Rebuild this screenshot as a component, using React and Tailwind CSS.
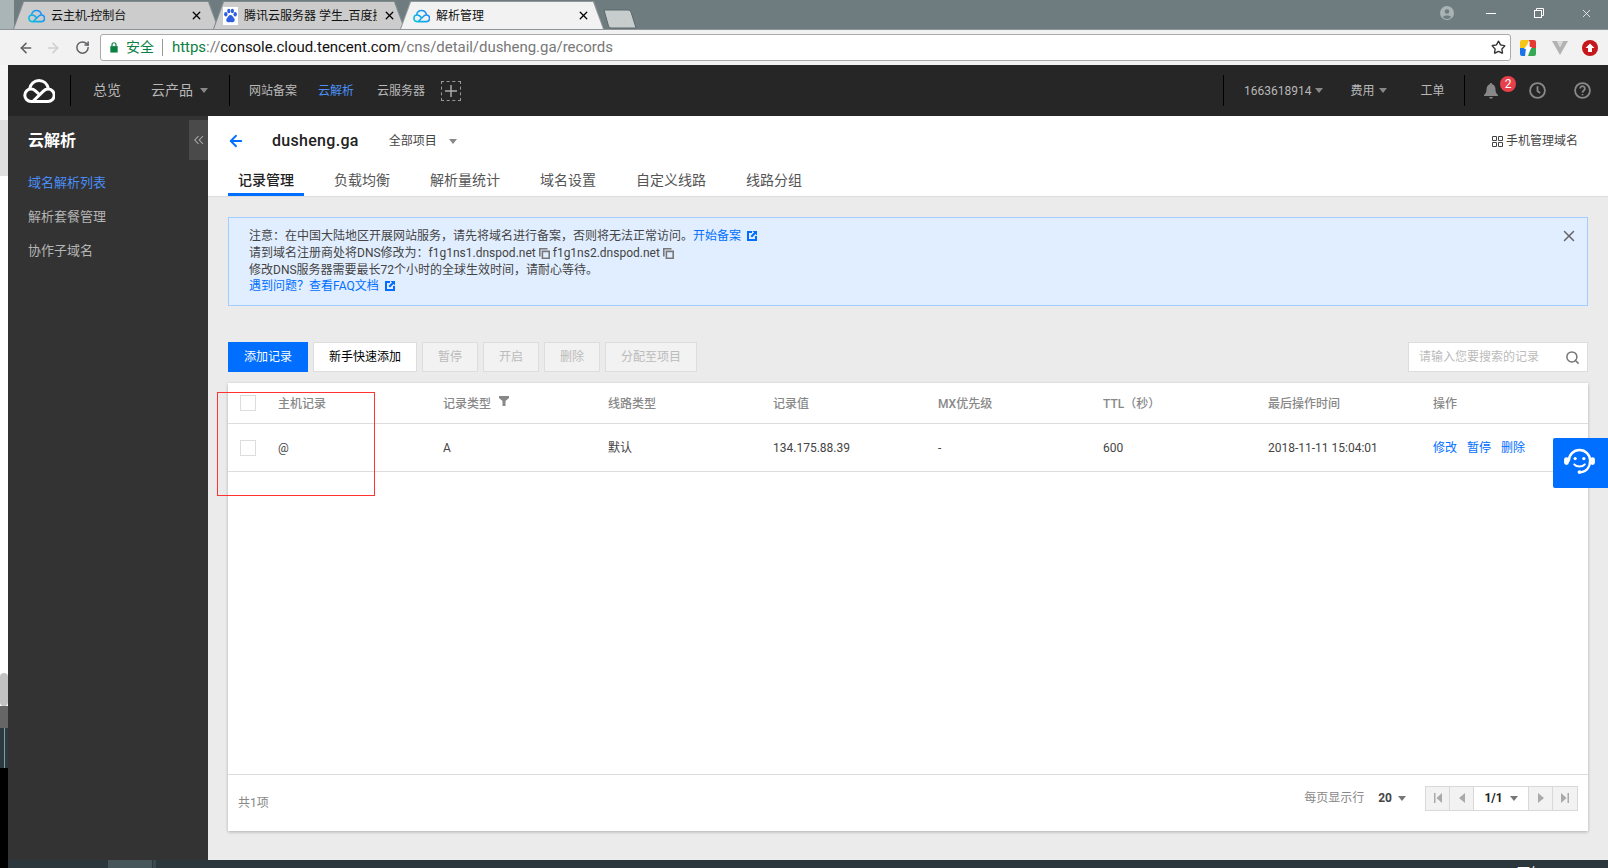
import React from "react";
import { ArrowLeft, ArrowRight, RotateCw, Star, X, Search } from "lucide-react";

const cloudPath = "M8 22.5H25a6.2 6.2 0 0 0 0-12.400c-1.800 0-3.400.8-4.600 2L10.800 21.500M8 22.500a6.200 6.200 0 1 1 0-12.400c1.800 0 3.200.7 4.400 1.800l2.500 2.200M6.500 10.300C7.500 5 11.200 1.500 16 1.500s8.500 3.500 9.500 8.600";

const Cloud = ({ className }) => (
  <svg viewBox="0 0 32 24" className={className} fill="none" stroke="currentColor" strokeWidth="3" strokeLinecap="round" strokeLinejoin="round">
    <path d={cloudPath} />
  </svg>
);

const FavCloud = ({ id }) => (
  <svg viewBox="0 0 32 24" className="w-[17px] h-[14px] shrink-0" fill="none" strokeWidth="3" strokeLinecap="round" strokeLinejoin="round">
    <defs>
      <linearGradient id={id} gradientUnits="userSpaceOnUse" x1="0" y1="24" x2="32" y2="0">
        <stop offset="0" stopColor="#00c8dc" />
        <stop offset="1" stopColor="#2a7fff" />
      </linearGradient>
    </defs>
    <path stroke={`url(#${id})`} d={cloudPath} />
  </svg>
);

const Paw = () => (
  <svg viewBox="0 0 16 18" className="w-[15px] h-[18px] shrink-0 bg-white">
    <g fill="#2f5fe0">
      <ellipse cx="3" cy="7" rx="1.800" ry="2.400" />
      <ellipse cx="6.200" cy="3.600" rx="1.700" ry="2.400" />
      <ellipse cx="10" cy="3.600" rx="1.700" ry="2.400" />
      <ellipse cx="13" cy="7" rx="1.800" ry="2.400" />
      <path d="M8 8c-2 0-2.400 2-3.600 3-1.400 1.200-1.200 4.400 1.200 4.600 1 .1 1.600-.3 2.400-.3s1.400.4 2.400.3c2.400-.2 2.600-3.400 1.200-4.600C10.400 10 10 8 8 8z" />
    </g>
  </svg>
);

const Caret = ({ className = "" }) => (
  <span className={`inline-block w-0 h-0 border-x-[4px] border-x-transparent border-t-[5px] ${className}`} />
);

const ExtLink = () => (
  <svg viewBox="0 0 10 10" className="inline-block w-[10px] h-[10px] ml-[6px] align-[-1px]">
    <path d="M0 0H5V2H2V8H8V5H10V10H0Z" fill="#006eff" />
    <path d="M5.500 0H10V4.500L8.500 3 5 6.500 3.500 5 7 1.500Z" fill="#006eff" />
  </svg>
);

const CopyIcon = () => (
  <svg viewBox="0 0 11 11" className="inline-block w-[11px] h-[11px] mx-[3px] align-[-2px]" fill="none" stroke="#777" strokeWidth="1.600">
    <path d="M0.800 8.500V0.800H8.500" />
    <path d="M3.400 3.400H10.200V10.200H3.400Z" />
  </svg>
);

const Check = () => <span className="block w-4 h-4 shrink-0 border border-[#ddd] bg-white" />;

const tabClip = "[clip-path:polygon(10px_0,calc(100%-10px)_0,100%_100%,0_100%)]";

function BrowserTab({ width, ml, active, icon, title, titleW, z, pl, mr }) {
  return (
    <div className={`relative h-[28px] mt-[1px] ${ml} ${width} ${z} ${tabClip} ${active ? "bg-[#8e9699]" : "bg-[#7f8a8d]"}`}>
      <div className={`absolute inset-x-0 top-[1px] bottom-0 mx-[1px] ${tabClip} flex items-center ${pl} ${active ? "bg-[#f2f2f2]" : "bg-[#cccccc]"}`}>
        {icon}
        <span className={`ml-[6px] overflow-hidden whitespace-nowrap text-[12px] text-[#111] ${titleW}`}>{title}</span>
        <X className={`w-[13px] h-[13px] ml-auto ${mr} text-black`} strokeWidth={2.4} />
      </div>
    </div>
  );
}

function Th({ children }) {
  return <div className="text-[12px] font-medium text-[#888] mt-[1px]">{children}</div>;
}

function DisBtn({ children }) {
  return <span className="h-[30px] px-[15px] flex items-center border border-[#ddd] bg-[#f2f2f2] text-[#bbb] text-[12px]">{children}</span>;
}

function PageCell({ children, last }) {
  return <span className={`w-[24px] h-full flex items-center justify-center bg-[#f2f2f2] ${last ? "" : "border-r border-[#d9d9d9]"}`}>{children}</span>;
}

export default function App() {
  return (
    <div className="relative w-[1608px] h-[868px] overflow-hidden flex flex-col bg-white [font-family:Roboto,'Noto_Sans_CJK_SC',sans-serif]">
      {/* browser tab strip */}
      <div className="h-[29px] shrink-0 flex pl-[13px] bg-[linear-gradient(to_right,#aab5b8_0,#aab5b8_14px,#6e7b7f_14px)]">
        <BrowserTab width="w-[206px]" ml="" z="z-0" pl="pl-[14px]" mr="mr-[15px]" icon={<FavCloud id="f1" />} title="云主机-控制台" titleW="w-[120px]" />
        <BrowserTab width="w-[192px]" ml="-ml-[6px]" z="z-0" pl="pl-[9px]" mr="mr-[8px]" icon={<Paw />} title="腾讯云服务器 学生_百度搜索" titleW="w-[133px]" />
        <BrowserTab width="w-[204px]" ml="-ml-[5px]" z="z-10" pl="pl-[12px]" mr="mr-[13px]" active icon={<FavCloud id="f2" />} title="解析管理" titleW="w-[60px]" />
        <svg viewBox="0 0 34 20" className="w-[34px] h-[20px] mt-[9px] -ml-[1px]">
          <path d="M1 1H25Q27 1 28 3L33 19H8Q6 19 5.500 17Z" fill="#c7cccd" stroke="#5d686b" />
        </svg>
        <div className="ml-auto flex items-center h-[26px] text-[#e8ecec]">
          <svg viewBox="0 0 16 16" className="w-[14px] h-[14px] mr-[32px] text-[#a9b3b5]">
            <circle cx="8" cy="8" r="8" fill="currentColor" />
            <circle cx="8" cy="6.200" r="2.600" fill="#6e7b7f" />
            <path d="M3.200 12.600c1-2.400 8.600-2.400 9.600 0a6.500 6.500 0 0 1-9.600 0z" fill="#6e7b7f" />
          </svg>
          <span className="w-[10px] h-[1px] bg-white mr-[38px]" />
          <svg viewBox="0 0 10 10" className="w-[10px] h-[10px] mr-[36px]" fill="none" stroke="#fff">
            <rect x="0.500" y="2.500" width="7" height="7" />
            <path d="M2.500 2.500V.5H9.500V7.500H7.500" />
          </svg>
          <X className="w-[13px] h-[13px] mr-[15px] text-white" strokeWidth={1.4} />
        </div>
      </div>

      {/* address bar */}
      <div className="h-[36px] shrink-0 bg-[#f2f2f2] border-t border-[#8b9597] flex items-center pl-[18px]">
        <ArrowLeft className="w-[16px] h-[16px] text-[#606266]" strokeWidth={2.4} />
        <ArrowRight className="w-[16px] h-[16px] ml-[11px] text-[#d0d0d0]" strokeWidth={2.4} />
        <RotateCw className="w-[15px] h-[15px] ml-[14px] text-[#606266]" strokeWidth={2.4} />
        <div className="ml-[10px] w-[1411px] h-[27px] bg-white border border-[#aaa] rounded-[3px] flex items-center pl-[9px] pr-[4px]">
          <svg viewBox="0 0 8 12" className="w-[8px] h-[11px]">
            <rect y="4.500" width="8" height="7" fill="#0b8043" />
            <path d="M1.800 5V3a2.200 2.200 0 0 1 4.400 0v2" fill="none" stroke="#0b8043" strokeWidth="1.300" />
          </svg>
          <span className="ml-[8px] text-[14px] text-[#0b8043]">安全</span>
          <span className="ml-[8px] w-[1px] h-[17px] bg-[#999]" />
          <span className="ml-[9px] text-[15px] tracking-[-0.04px] whitespace-nowrap">
            <span className="text-[#0b8043]">https</span>
            <span className="text-[#777]">://</span>
            <span className="text-[#111]">console.cloud.tencent.com</span>
            <span className="text-[#777]">/cns/detail/dusheng.ga/records</span>
          </span>
          <Star className="ml-auto w-[15px] h-[15px] text-[#333]" strokeWidth={2.2} />
        </div>
        <svg viewBox="0 0 16 16" className="w-[16px] h-[16px] ml-[9px]">
          <path d="M2 0H9L6 8H0V2Q0 0 2 0Z" fill="#f5c518" />
          <path d="M9 0H14Q16 0 16 2V8H10Z" fill="#e53935" />
          <path d="M0 8H6L5 16H2Q0 16 0 14Z" fill="#1a73e8" />
          <path d="M8 16L11 8H16V14Q16 16 14 16Z" fill="#34a853" />
          <path d="M10 1L4 9H7.500L6 15L12 7H8.500Z" fill="#fff" />
        </svg>
        <svg viewBox="0 0 16 14" className="w-[16px] h-[14px] ml-[16px]">
          <path d="M0 0H5L8 6 11 0H16L8 14Z" fill="#b3b3b3" />
          <path d="M5 0H11L8 6Z" fill="#d9d9d9" />
        </svg>
        <svg viewBox="0 0 16 16" className="w-[16px] h-[16px] ml-[14px]">
          <circle cx="8" cy="8" r="8" fill="#c5171c" />
          <path d="M8 3.500L12.500 8H10V12H6V8H3.500Z" fill="#fff" />
        </svg>
      </div>

      <div className="flex-1 flex min-h-0">
        {/* left strip of the window behind */}
        <div className="w-[8px] shrink-0 flex flex-col">
          <div className="h-[55px] bg-[#f5f5f5]" />
          <div className="h-[56px] bg-[#e0e0e0]" />
          <div className="h-[497px] bg-white" />
          <div className="h-[33px] bg-[#c2c2c2] rounded-[4px]" />
          <div className="h-[22px] bg-[#666]" />
          <div className="h-[40px] bg-[#2b3a40] flex justify-center"><span className="w-[1px] bg-[#8a9a9a]" /></div>
          <div className="flex-1 bg-black" />
        </div>

        <div className="flex-1 flex flex-col min-w-0">
          {/* console nav */}
          <div className="h-[51px] shrink-0 bg-[#262626] flex items-center text-[#b8b8b8] relative">
            <Cloud className="w-[32px] h-[24px] ml-[15px] text-white" />
            <span className="w-[1px] h-[31px] bg-black ml-[15px]" />
            <span className="ml-[22px] text-[14px]">总览</span>
            <span className="ml-[30px] text-[14px]">云产品</span>
            <Caret className="ml-[7px] border-t-[#888]" />
            <span className="w-[1px] h-[31px] bg-black ml-[21px]" />
            <span className="ml-[19px] text-[12px]">网站备案</span>
            <span className="ml-[21px] text-[12px] text-[#4a90f5]">云解析</span>
            <span className="ml-[23px] text-[12px]">云服务器</span>
            <span className="ml-[16px] w-[20px] h-[20px] border border-dashed border-[#999] flex items-center justify-center text-[#aaa]">
              <svg viewBox="0 0 12 12" className="w-[12px] h-[12px]"><path d="M6 0V12M0 6H12" stroke="currentColor" strokeWidth="1.500" /></svg>
            </span>
            <span className="w-[1px] h-[31px] bg-black ml-[762px]" />
            <span className="ml-[20px] text-[12px]">1663618914</span>
            <Caret className="ml-[3px] border-t-[#888]" />
            <span className="ml-[28px] text-[12px]">费用</span>
            <Caret className="ml-[4px] border-t-[#888]" />
            <span className="ml-[34px] text-[12px]">工单</span>
            <span className="w-[1px] h-[31px] bg-black ml-[19px]" />
            <svg viewBox="0 0 14 16" className="ml-[19px] w-[14px] h-[16px] text-[#888]">
              <path d="M7 0a1.200 1.200 0 0 1 1.200 1.300C10.500 2 11.500 4 11.500 6.500c0 3 1 4 2.500 5.500v1H0v-1c1.500-1.500 2.500-2.500 2.500-5.500 0-2.500 1-4.500 3.300-5.200A1.200 1.200 0 0 1 7 0zM5.200 14h3.600a1.800 1.800 0 0 1-3.600 0z" fill="currentColor" />
            </svg>
            <span className="absolute left-[1492px] top-[11px] w-4 h-4 rounded-full bg-[#e8404a] text-white text-[12px] leading-4 text-center">2</span>
            <svg viewBox="0 0 16 16" className="ml-[31px] w-[17px] h-[17px]" fill="none" stroke="#888" strokeWidth="1.700">
              <circle cx="8" cy="8" r="7" /><path d="M8 4V8.500L10.500 10.500" />
            </svg>
            <svg viewBox="0 0 16 16" className="ml-[28px] w-[17px] h-[17px]" fill="none" stroke="#888" strokeWidth="1.700">
              <circle cx="8" cy="8" r="7" /><path d="M5.800 6.200a2.200 2.200 0 1 1 3.400 1.800C8.300 8.600 8 9 8 10" /><path d="M8 11.300V12.500" />
            </svg>
          </div>

          <div className="flex-1 flex min-h-0">
            {/* sidebar */}
            <aside className="w-[200px] shrink-0 bg-[#333] relative pl-[20px]">
              <div className="mt-[13px] text-[16px] font-bold text-white leading-[24px]">云解析</div>
              <div className="mt-[20px] text-[13px] leading-[20px] text-[#4a8df5]">域名解析列表</div>
              <div className="mt-[14px] text-[13px] leading-[20px] text-[#b5b5b5]">解析套餐管理</div>
              <div className="mt-[14px] text-[13px] leading-[20px] text-[#b5b5b5]">协作子域名</div>
              <div className="absolute right-0 top-[4px] w-[19px] h-[40px] bg-[#4a4a4a] flex items-center justify-center">
                <svg viewBox="0 0 10 10" className="w-[10px] h-[10px]" fill="none" stroke="#aaa" strokeWidth="1.100">
                  <path d="M4.500 1L.8 5 4.500 9M9 1L5.300 5 9 9" />
                </svg>
              </div>
            </aside>

            {/* main */}
            <main className="flex-1 min-w-0 flex flex-col bg-[#ebebeb]">
              <header className="h-[81px] shrink-0 bg-white border-b border-[#ddd] flex flex-col">
                <div className="h-[50px] flex items-center pl-[19px] pr-[30px]">
                  <ArrowLeft className="w-[18px] h-[18px] text-[#006eff]" strokeWidth={2.4} />
                  <span className="ml-[27px] text-[16px] font-medium tracking-[0.3px] text-[#222]">dusheng.ga</span>
                  <span className="ml-[30px] text-[12px] text-[#444]">全部项目</span>
                  <Caret className="ml-[12px] border-t-[#888]" />
                  <svg viewBox="0 0 11 11" className="ml-auto w-[11px] h-[11px]" fill="none" stroke="#444">
                    <path d="M.5 .5H4.500V4.500H.5ZM6.500 .5H10.500V4.500H6.500ZM.5 6.500H4.500V10.500H.5ZM6.500 6.500H10.500V10.500H6.500Z" />
                  </svg>
                  <span className="ml-[3px] text-[12px] text-[#444]">手机管理域名</span>
                </div>
                <nav className="h-[30px] pl-[20px] flex gap-[20px] text-[14px] leading-[28px] text-[#555]">
                  <span className="px-[10px] h-[30px] border-b-[3px] border-[#006eff] font-medium text-[#222]">记录管理</span>
                  <span className="px-[10px]">负载均衡</span>
                  <span className="px-[10px]">解析量统计</span>
                  <span className="px-[10px]">域名设置</span>
                  <span className="px-[10px]">自定义线路</span>
                  <span className="px-[10px]">线路分组</span>
                </nav>
              </header>

              <div className="flex-1 min-h-0 px-[20px] pt-[20px] flex flex-col">
                <div className="relative h-[89px] shrink-0 border border-[#a3ccff] bg-[#e1eeff] pl-[20px] pt-[10px] text-[12px] leading-[17px] text-[#444]">
                  <div>注意：在中国大陆地区开展网站服务，请先将域名进行备案，否则将无法正常访问。<span className="text-[#006eff]">开始备案</span><ExtLink /></div>
                  <div>请到域名注册商处将DNS修改为：<span>f1g1ns1.dnspod.net</span><CopyIcon /><span>f1g1ns2.dnspod.net</span><CopyIcon /></div>
                  <div>修改DNS服务器需要最长72个小时的全球生效时间，请耐心等待。</div>
                  <div className="text-[#006eff] -mt-[1px]">遇到问题？查看FAQ文档<ExtLink /></div>
                  <X className="absolute right-[9px] top-[9px] w-[18px] h-[18px] text-[#666]" strokeWidth={2} />
                </div>

                <div className="mt-[36px] flex gap-[5px] h-[30px] shrink-0 text-[12px]">
                  <span className="h-[30px] px-4 flex items-center bg-[#006eff] text-white">添加记录</span>
                  <span className="h-[30px] px-[15px] flex items-center bg-white border border-[#ddd] text-black">新手快速添加</span>
                  <DisBtn>暂停</DisBtn>
                  <DisBtn>开启</DisBtn>
                  <DisBtn>删除</DisBtn>
                  <DisBtn>分配至项目</DisBtn>
                  <div className="ml-auto w-[180px] h-[30px] bg-white border border-[#ddd] flex items-center pl-[10px] pr-[7px]">
                    <span className="text-[#bbb]">请输入您要搜索的记录</span>
                    <Search className="ml-auto w-[15px] h-[15px] text-[#777]" strokeWidth={2.4} />
                  </div>
                </div>

                <div className="mt-[11px] h-[448px] shrink-0 bg-white shadow-[0_1px_3px_rgba(0,0,0,0.25)] flex flex-col">
                  <div className="h-[41px] shrink-0 border-b border-[#ddd] flex items-center pl-[12px]">
                    <Check />
                    <div className="ml-[22px] min-w-0 grid grid-cols-[repeat(8,165px)] flex-1">
                      <Th>主机记录</Th>
                      <div className="flex items-start gap-[8px]">
                        <Th>记录类型</Th>
                        <svg viewBox="0 0 10 10" className="w-[10px] h-[10px] mt-[2px]"><path d="M0 0H10V2L6.500 5V10H3.500V5L0 2Z" fill="#888" /></svg>
                      </div>
                      <Th>线路类型</Th>
                      <Th>记录值</Th>
                      <Th>MX优先级</Th>
                      <Th>TTL（秒）</Th>
                      <Th>最后操作时间</Th>
                      <Th>操作</Th>
                    </div>
                  </div>
                  <div className="h-[48px] shrink-0 border-b border-[#ddd] flex items-center pl-[12px] text-[12px] text-[#444]">
                    <Check />
                    <div className="ml-[22px] min-w-0 grid grid-cols-[repeat(8,165px)] flex-1">
                      <div>@</div>
                      <div>A</div>
                      <div>默认</div>
                      <div>134.175.88.39</div>
                      <div>-</div>
                      <div>600</div>
                      <div>2018-11-11 15:04:01</div>
                      <div className="flex gap-[10px] text-[#006eff]"><span>修改</span><span>暂停</span><span>删除</span></div>
                    </div>
                  </div>
                  <div className="flex-1" />
                  <div className="h-[57px] shrink-0 border-t border-[#ddd] flex items-center pl-[10px] pr-[10px] text-[12px] text-[#888]">
                    <span>共1项</span>
                    <span className="ml-auto -mt-[10px]">每页显示行</span>
                    <span className="ml-[14px] -mt-[10px] font-bold text-[#444]">20</span>
                    <Caret className="ml-[6px] -mt-[10px] border-t-[#777]" />
                    <div className="ml-[19px] -mt-[10px] h-[25px] w-[153px] border border-[#d9d9d9] flex items-stretch">
                      <PageCell><svg viewBox="0 0 8 10" className="w-[8px] h-[10px]"><path d="M0 0H1.500V10H0ZM8 0V10L2.500 5Z" fill="#aaa" /></svg></PageCell>
                      <PageCell><svg viewBox="0 0 6 10" className="w-[6px] h-[10px]"><path d="M6 0V10L0 5Z" fill="#aaa" /></svg></PageCell>
                      <span className="flex-1 flex items-center justify-center gap-[7px] bg-white border-r border-[#d9d9d9]">
                        <span className="font-bold text-[#222]">1/1</span><Caret className="border-t-[#777]" />
                      </span>
                      <PageCell><svg viewBox="0 0 6 10" className="w-[6px] h-[10px]"><path d="M0 0V10L6 5Z" fill="#aaa" /></svg></PageCell>
                      <PageCell last><svg viewBox="0 0 8 10" className="w-[8px] h-[10px]"><path d="M8 0H6.500V10H8ZM0 0V10L5.500 5Z" fill="#aaa" /></svg></PageCell>
                    </div>
                  </div>
                </div>
              </div>
            </main>
          </div>

          {/* desktop taskbar peeking in */}
          <div className="h-[8px] shrink-0 bg-[#2b373d] flex overflow-hidden relative">
            <span className="ml-[100px] w-[44px] bg-[#45555a]" />
            <span className="ml-[1px] w-[3px] bg-[#3a494f]" />
            <span className="absolute left-[1509px] top-[5px] text-[13px] leading-[16px] text-white whitespace-nowrap">下午 1:07:50</span>
          </div>
        </div>
      </div>

      {/* annotation drawn over the shot */}
      <div className="absolute left-[217px] top-[392px] w-[158px] h-[104px] border border-[#f33]" />
      {/* floating help tab */}
      <div className="absolute left-[1553px] top-[438px] w-[55px] h-[50px] bg-[#006eff] rounded-l-[2px] flex items-center justify-center pr-[3px] pb-[4px]">
        <svg viewBox="0 0 34 28" className="w-[33px] h-[27px]" fill="none" stroke="#fff" strokeWidth="2.500" strokeLinecap="round">
          <path d="M6 13a11 11 0 0 1 22 0c0 6-3 11-9 12" />
          <rect x="1" y="9.500" width="5" height="8" rx="2.500" fill="#fff" stroke="none" />
          <rect x="28" y="9.500" width="5" height="8" rx="2.500" fill="#fff" stroke="none" />
          <circle cx="17" cy="25" r="2" fill="#fff" stroke="none" />
          <circle cx="12.500" cy="11" r="1.700" fill="#fff" stroke="none" />
          <circle cx="21.500" cy="11" r="1.700" fill="#fff" stroke="none" />
          <path d="M11.500 17c2.500 3 8.500 3 11 0" strokeWidth="2" />
        </svg>
      </div>
    </div>
  );
}
